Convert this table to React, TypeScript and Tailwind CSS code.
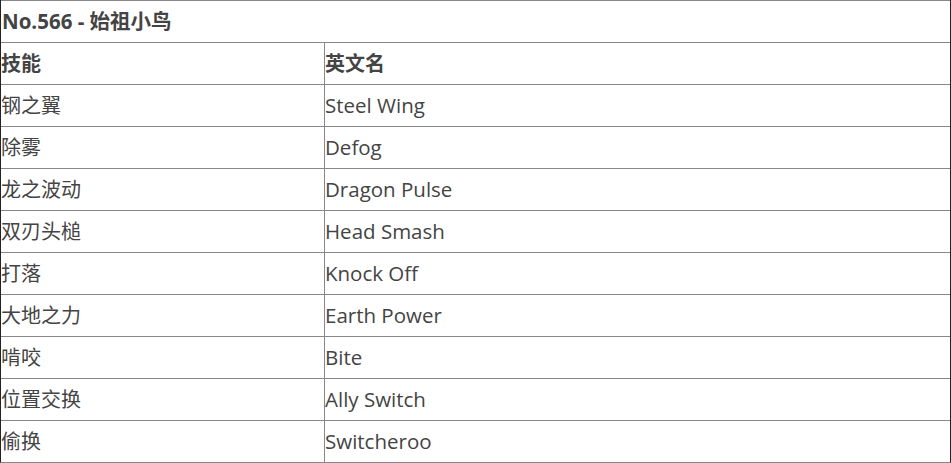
const rows: [string, string][] = [
  ["钢之翼", "Steel Wing"],
  ["除雾", "Defog"],
  ["龙之波动", "Dragon Pulse"],
  ["双刃头槌", "Head Smash"],
  ["打落", "Knock Off"],
  ["大地之力", "Earth Power"],
  ["啃咬", "Bite"],
  ["位置交换", "Ally Switch"],
  ["偷换", "Switcheroo"],
]

export default function App() {
  return (
    <div
      className="w-[951px] h-[463px] bg-white text-[#444] text-[20px] border-x border-x-[#222] border-b border-b-[#888]"
      style={{ fontFamily: '"Open Sans", "Noto Sans CJK SC", sans-serif' }}
    >
      <div className="h-[42px] border-t border-[#888] flex items-center font-bold px-[1px] text-[20.5px]">
        No.566 - 始祖小鸟
      </div>
      <div className="h-[42px] border-t border-[#888] flex font-bold">
        <div className="w-[324px] border-r border-[#888] flex items-center">技能</div>
        <div className="flex-1 flex items-center">英文名</div>
      </div>
      {rows.map(([cn, en]) => (
        <div key={en} className="h-[42px] border-t border-[#888] flex">
          <div className="w-[324px] border-r border-[#888] flex items-center">{cn}</div>
          <div className="flex-1 flex items-center text-[20.5px]">{en}</div>
        </div>
      ))}
    </div>
  )
}
